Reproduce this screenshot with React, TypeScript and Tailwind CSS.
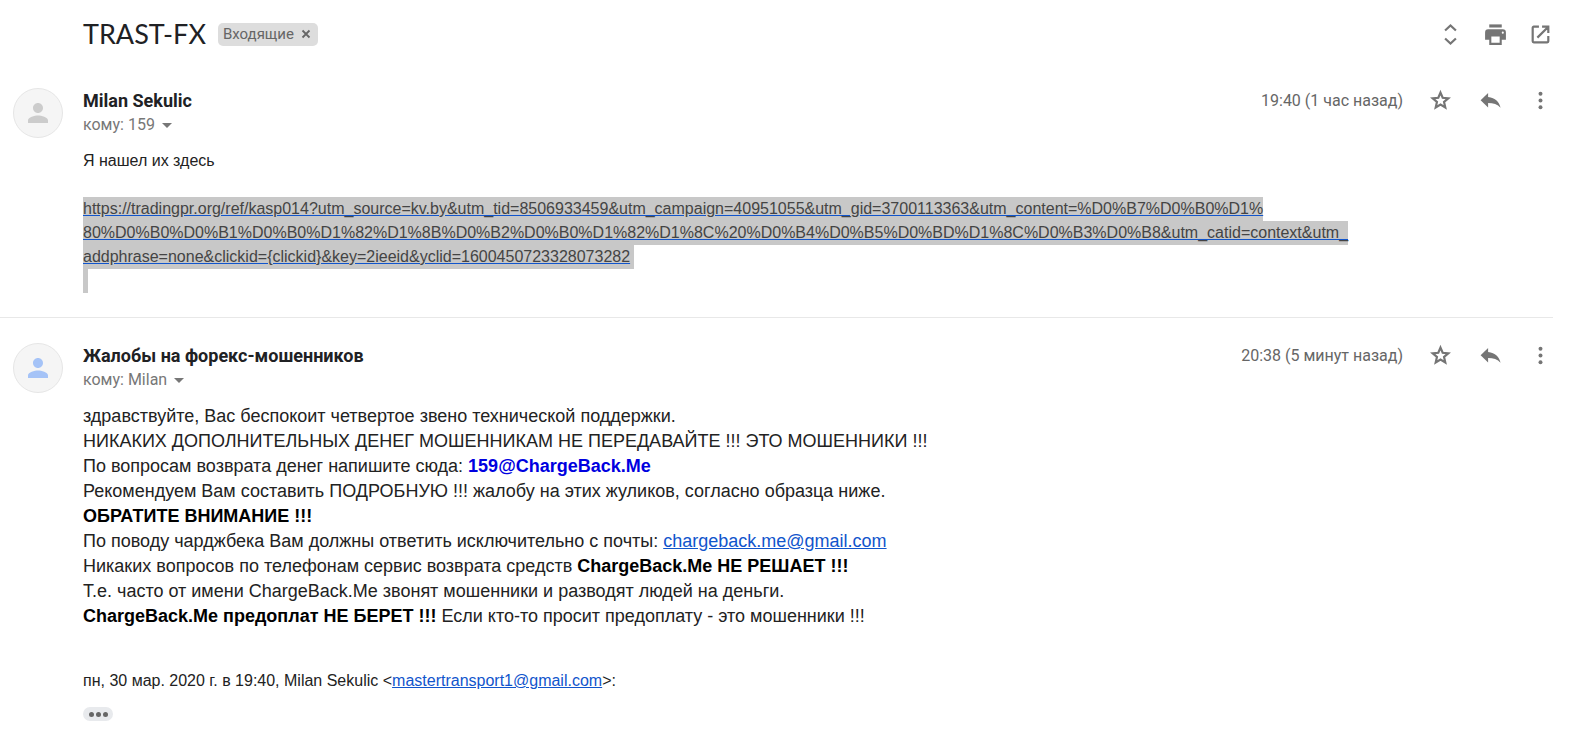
import type { ReactNode } from "react";
import { MdArrowDropDown, MdPerson } from "react-icons/md";

function ExpandIcon() {
  return (
    <svg viewBox="0 0 24 24" className="size-full" fill="none" stroke="currentColor" strokeWidth="2.1">
      <path d="M6.8 8.2L12 3.4l5.2 4.8M6.8 15.8l5.2 4.8 5.2-4.8" />
    </svg>
  );
}

function PrintIcon() {
  return (
    <svg viewBox="0 0 24 24" className="size-full" fill="currentColor" fillRule="evenodd">
      <path d="M6 2.3h12v3H6z" />
      <path d="M5 7h14a3 3 0 0 1 3 3v7h-4v5H6v-5H2v-7a3 3 0 0 1 3-3zm3 7v6h8v-6zm11-4.8a1 1 0 1 0 0 2 1 1 0 0 0 0-2z" />
    </svg>
  );
}

function NewWindowIcon() {
  return (
    <svg viewBox="0 0 24 24" className="size-full" fill="none" stroke="currentColor" strokeWidth="2.1">
      <path d="M10.5 4.5H5.5a1 1 0 0 0-1 1v13a1 1 0 0 0 1 1h13a1 1 0 0 0 1-1v-5M13.5 4.5h6v6M19.5 4.5L9 15" />
    </svg>
  );
}

function StarIcon() {
  return (
    <svg viewBox="0 0 24 24" className="size-full" fill="none" stroke="currentColor" strokeWidth="2.1">
      <path d="M12 4.4l2.1 5 5.4.5-4.1 3.5 1.2 5.3L12 15.9l-4.6 2.8 1.2-5.3-4.1-3.5 5.4-.5z" />
    </svg>
  );
}

function ReplyIcon() {
  return (
    <svg viewBox="0 0 24 24" className="size-full" fill="currentColor">
      <path d="M9.7 8.6V4.8l-7.2 7 7.2 6.8v-4.2c5 0 9 1.2 12 4.6-1.3-5.5-5-9.8-12-10.4z" />
    </svg>
  );
}

function MoreIcon() {
  return (
    <svg viewBox="0 0 24 24" className="size-full" fill="currentColor">
      <circle cx="12" cy="5.6" r="1.9" />
      <circle cx="12" cy="12" r="1.9" />
      <circle cx="12" cy="18.4" r="1.9" />
    </svg>
  );
}

type IconButtonProps = {
  label: string;
  children: ReactNode;
};

function IconButton({ label, children }: IconButtonProps) {
  return (
    <button type="button" aria-label={label} className="flex size-[25px] shrink-0 items-center justify-center text-[#757575]">
      {children}
    </button>
  );
}

type MessageProps = {
  sender: string;
  recipient: string;
  time: string;
  avatarClass: string;
  children: ReactNode;
};

function Message({ sender, recipient, time, avatarClass, children }: MessageProps) {
  return (
    <article className="flex gap-5 pl-[13px]">
      <div className={`flex size-[50px] shrink-0 items-center justify-center rounded-full border border-[#e6e6e6] bg-[#f5f5f5] text-[30px] ${avatarClass}`}>
        <MdPerson />
      </div>
      <div className="min-w-0 flex-1">
        <header className="flex items-start justify-between">
          <div className="font-[Roboto,sans-serif]">
            <h2 className="text-[18px] leading-[25px] font-bold text-[#202124]">{sender}</h2>
            <button type="button" className="flex items-center text-[16px] leading-6 text-[#777]">
              кому: {recipient}
              <MdArrowDropDown className="text-[24px]" />
            </button>
          </div>
          <div className="flex items-center gap-[25px]">
            <time className="font-[Roboto,sans-serif] text-[16px] leading-[25px] text-[#666]">{time}</time>
            <IconButton label="Пометить">
              <StarIcon />
            </IconButton>
            <IconButton label="Ответить">
              <ReplyIcon />
            </IconButton>
            <IconButton label="Ещё">
              <MoreIcon />
            </IconButton>
          </div>
        </header>
        {children}
      </div>
    </article>
  );
}

const linkLines = [
  "https://tradingpr.org/ref/kasp014?utm_source=kv.by&utm_tid=8506933459&utm_campaign=40951055&utm_gid=3700113363&utm_content=%D0%B7%D0%B0%D1%",
  "80%D0%B0%D0%B1%D0%B0%D1%82%D1%8B%D0%B2%D0%B0%D1%82%D1%8C%20%D0%B4%D0%B5%D0%BD%D1%8C%D0%B3%D0%B8&utm_catid=context&utm_",
  "addphrase=none&clickid={clickid}&key=2ieeid&yclid=1600450723328073282",
];

export default function App() {
  return (
    <main className="bg-white pr-[18px] font-['Liberation_Sans',Arial,sans-serif] text-[#222]">
      <header className="flex items-center justify-between pt-[14px] pl-[83px]">
        <div className="flex items-center gap-3">
          <h1 className="font-[Lato,sans-serif] text-[27px] leading-10 text-[#202124]">TRAST-FX</h1>
          <span className="flex h-[23px] items-center gap-[5px] rounded-[5px] bg-[#ddd] px-[5px] font-[Roboto,sans-serif] text-[15px] text-[#666]">
            Входящие
            <button type="button" aria-label="Удалить ярлык">
              <svg viewBox="0 0 14 14" className="size-[14px]" fill="none" stroke="currentColor" strokeWidth="1.8">
                <path d="M3.5 3.5l7 7M10.5 3.5l-7 7" />
              </svg>
            </button>
          </span>
        </div>
        <div className="flex items-center gap-5">
          <IconButton label="Развернуть все">
            <ExpandIcon />
          </IconButton>
          <IconButton label="Печать">
            <PrintIcon />
          </IconButton>
          <IconButton label="В новом окне">
            <NewWindowIcon />
          </IconButton>
        </div>
      </header>

      <div className="border-b border-[#e8e8e8] pt-[34px] pb-6">
        <Message sender="Milan Sekulic" recipient="159" time="19:40 (1 час назад)" avatarClass="text-[#ccc]">
          <div className="pt-3 text-[16px] leading-6">
            <p>Я нашел их здесь</p>
            <a href="#" className="mt-6 block text-[#444] underline decoration-[#15c]">
              {linkLines.map((line) => (
                <span key={line} className="block w-fit bg-[#c8c8c8] whitespace-nowrap last:pr-1">
                  {line}
                </span>
              ))}
            </a>
            <div className="h-6 w-[5px] bg-[#c8c8c8]" />
          </div>
        </Message>
      </div>

      <div className="pt-[25px]">
        <Message sender="Жалобы на форекс-мошенников" recipient="Milan" time="20:38 (5 минут назад)" avatarClass="text-[#a5c3f7]">
          <div className="pt-3 text-[18px] leading-[25px]">
            <p>здравствуйте, Вас беспокоит четвертое звено технической поддержки.</p>
            <p>НИКАКИХ ДОПОЛНИТЕЛЬНЫХ ДЕНЕГ МОШЕННИКАМ НЕ ПЕРЕДАВАЙТЕ !!! ЭТО МОШЕННИКИ !!!</p>
            <p>
              По вопросам возврата денег напишите сюда: <b className="text-[#0000e0]">159@ChargeBack.Me</b>
            </p>
            <p>Рекомендуем Вам составить ПОДРОБНУЮ !!! жалобу на этих жуликов, согласно образца ниже.</p>
            <p>
              <b className="text-black">ОБРАТИТЕ ВНИМАНИЕ !!!</b>
            </p>
            <p>
              По поводу чарджбека Вам должны ответить исключительно с почты:{" "}
              <a href="mailto:chargeback.me@gmail.com" className="text-[#15c] underline">
                chargeback.me@gmail.com
              </a>
            </p>
            <p>
              Никаких вопросов по телефонам сервис возврата средств <b className="text-black">ChargeBack.Me НЕ РЕШАЕТ !!!</b>
            </p>
            <p>Т.е. часто от имени ChargeBack.Me звонят мошенники и разводят людей на деньги.</p>
            <p>
              <b className="text-black">ChargeBack.Me предоплат НЕ БЕРЕТ !!!</b> Если кто-то просит предоплату - это мошенники !!!
            </p>
          </div>
          <p className="mt-10 text-[16px] leading-6">
            пн, 30 мар. 2020 г. в 19:40, Milan Sekulic &lt;
            <a href="mailto:mastertransport1@gmail.com" className="text-[#15c] underline">
              mastertransport1@gmail.com
            </a>
            &gt;:
          </p>
          <button type="button" aria-label="Показать скрытый текст" className="mt-[14px] flex h-[14px] w-[30px] items-center justify-center gap-0.5 rounded-full bg-[#e8eaed]">
            <span className="size-[5px] rounded-full bg-[#666]" />
            <span className="size-[5px] rounded-full bg-[#666]" />
            <span className="size-[5px] rounded-full bg-[#666]" />
          </button>
        </Message>
      </div>
    </main>
  );
}
